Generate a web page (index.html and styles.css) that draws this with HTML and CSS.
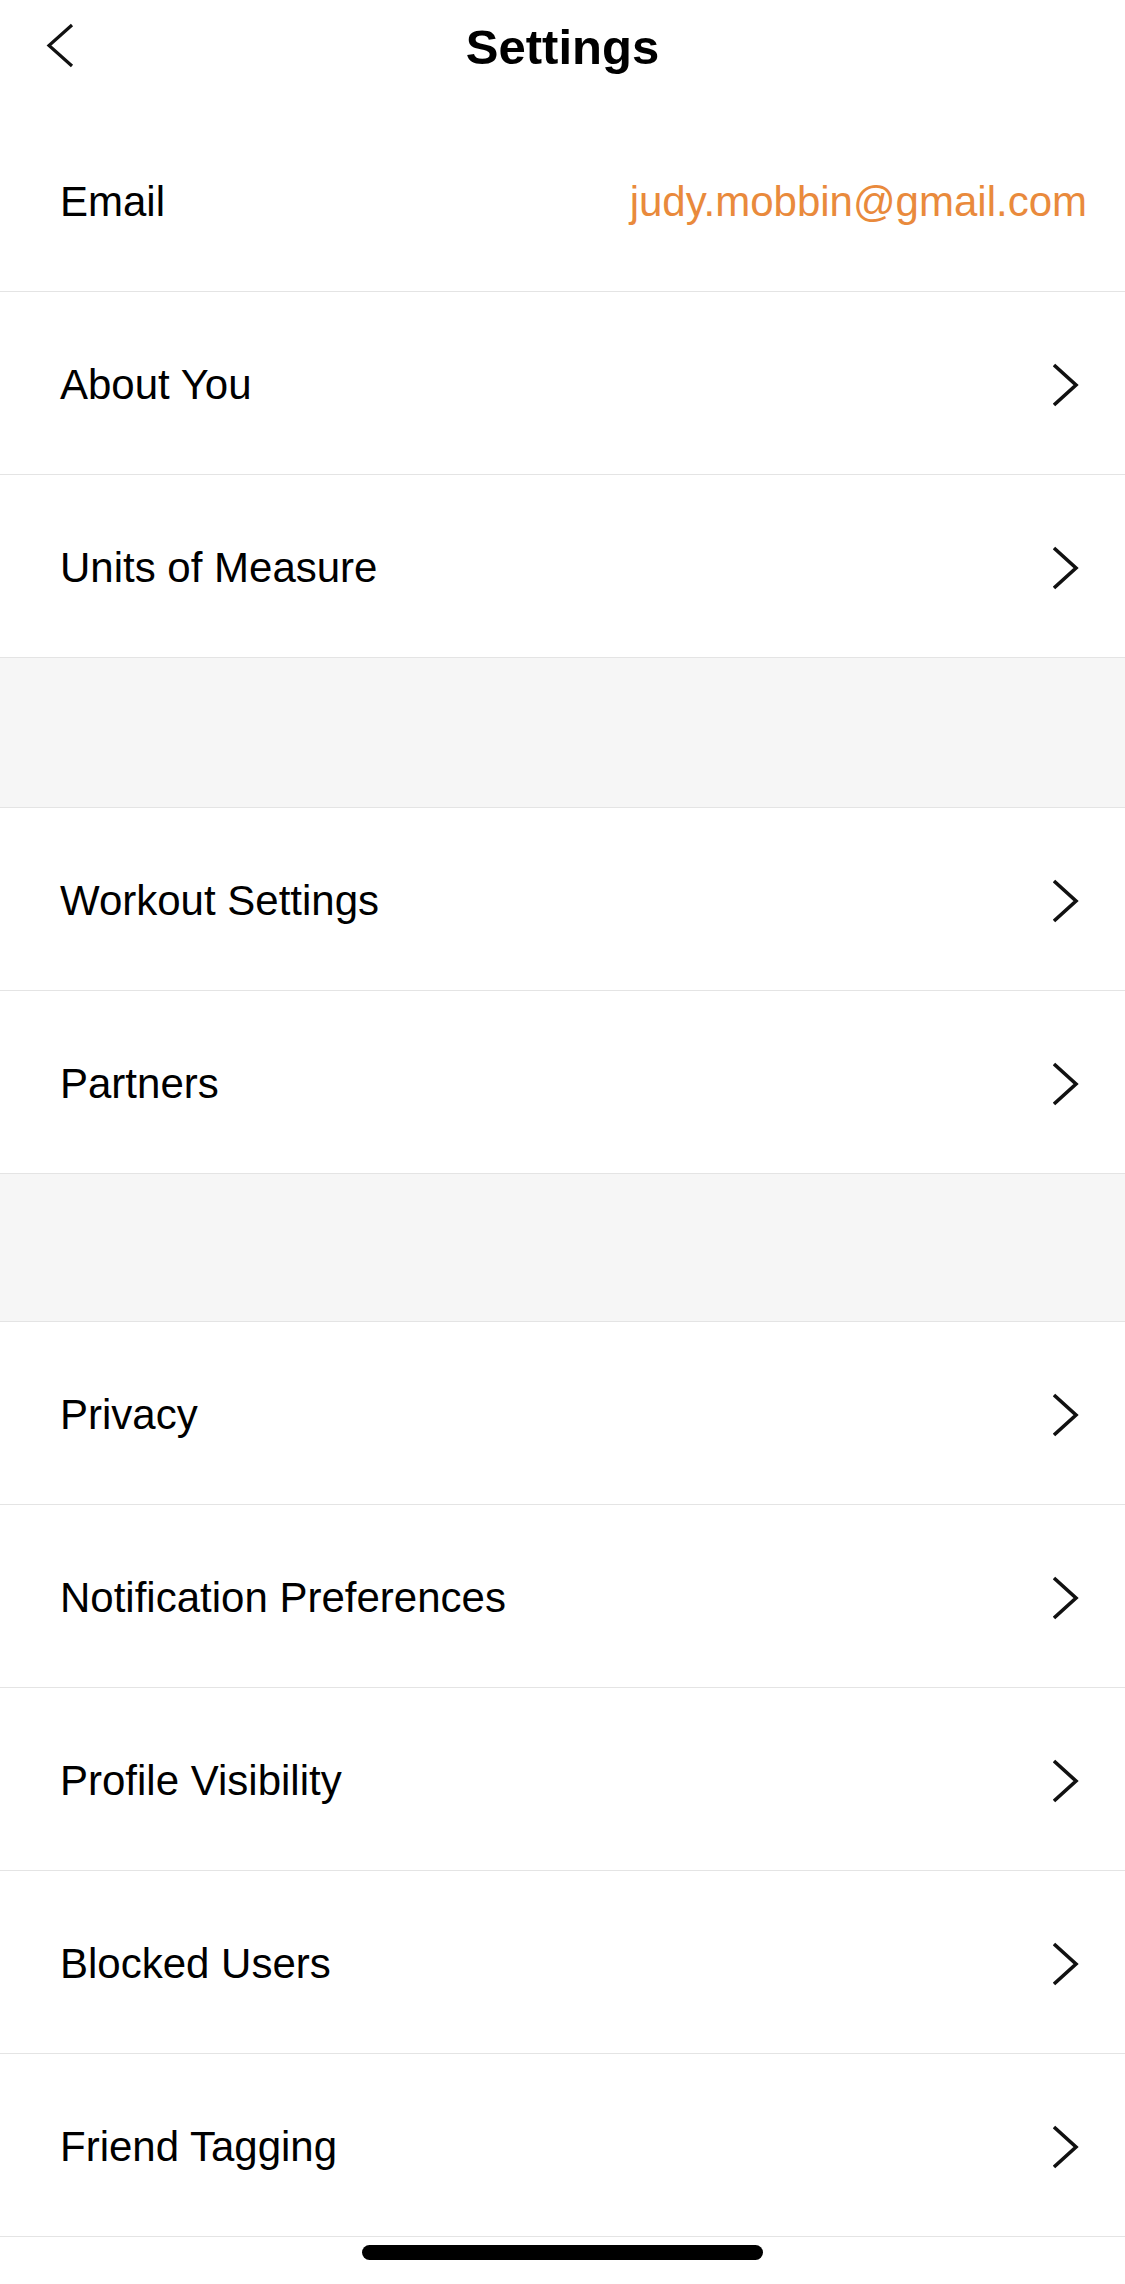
FILE: index.html
```html
<!DOCTYPE html>
<html lang="en">
<head>
<meta charset="utf-8">
<title>Settings</title>
<link rel="stylesheet" href="styles.css">
</head>
<body>
<div class="screen">
  <header class="topbar">
    <button class="back" aria-label="Back">
      <svg width="30" height="48" viewBox="0 0 30 48"><path d="M27 3 L4 23.5 L27 44" fill="none" stroke="#111" stroke-width="3.2" stroke-linejoin="miter"/></svg>
    </button>
    <h1 class="title">Settings</h1>
    <span class="spacer"></span>
  </header>

  <ul class="group">
    <li class="row"><span class="label">Email</span><span class="value">judy.mobbin@gmail.com</span></li>
    <li class="row"><span class="label">About You</span><svg class="chev" width="34" height="48" viewBox="0 0 34 48"><path d="M1 4 L23 24 L1 44" fill="none" stroke="#111" stroke-width="3.6"/></svg></li>
    <li class="row"><span class="label">Units of Measure</span><svg class="chev" width="34" height="48" viewBox="0 0 34 48"><path d="M1 4 L23 24 L1 44" fill="none" stroke="#111" stroke-width="3.6"/></svg></li>
  </ul>
  <div class="gap"></div>
  <ul class="group">
    <li class="row"><span class="label">Workout Settings</span><svg class="chev" width="34" height="48" viewBox="0 0 34 48"><path d="M1 4 L23 24 L1 44" fill="none" stroke="#111" stroke-width="3.6"/></svg></li>
    <li class="row"><span class="label">Partners</span><svg class="chev" width="34" height="48" viewBox="0 0 34 48"><path d="M1 4 L23 24 L1 44" fill="none" stroke="#111" stroke-width="3.6"/></svg></li>
  </ul>
  <div class="gap gap-b"></div>
  <ul class="group">
    <li class="row"><span class="label">Privacy</span><svg class="chev" width="34" height="48" viewBox="0 0 34 48"><path d="M1 4 L23 24 L1 44" fill="none" stroke="#111" stroke-width="3.6"/></svg></li>
    <li class="row"><span class="label">Notification Preferences</span><svg class="chev" width="34" height="48" viewBox="0 0 34 48"><path d="M1 4 L23 24 L1 44" fill="none" stroke="#111" stroke-width="3.6"/></svg></li>
    <li class="row"><span class="label">Profile Visibility</span><svg class="chev" width="34" height="48" viewBox="0 0 34 48"><path d="M1 4 L23 24 L1 44" fill="none" stroke="#111" stroke-width="3.6"/></svg></li>
    <li class="row"><span class="label">Blocked Users</span><svg class="chev" width="34" height="48" viewBox="0 0 34 48"><path d="M1 4 L23 24 L1 44" fill="none" stroke="#111" stroke-width="3.6"/></svg></li>
    <li class="row"><span class="label">Friend Tagging</span><svg class="chev" width="34" height="48" viewBox="0 0 34 48"><path d="M1 4 L23 24 L1 44" fill="none" stroke="#111" stroke-width="3.6"/></svg></li>
  </ul>
  <div class="home-indicator"></div>
</div>
</body>
</html>
```

FILE: styles.css
```css
* { box-sizing: border-box; }
html, body {
  margin: 0;
  padding: 0;
  background: #ffffff;
}
body {
  font-family: "Liberation Sans", Arial, Helvetica, sans-serif;
  color: #000;
}
.screen {
  width: 1125px;
  min-height: 2284px;
  background: #fff;
}
.topbar {
  height: 92px;
  margin-bottom: 17px;
  display: grid;
  grid-template-columns: 200px 1fr 200px;
  align-items: center;
}
.back {
  border: 0;
  background: none;
  padding: 0 0 0 45px;
  margin: 0;
  display: flex;
  align-items: center;
  height: 48px;
  cursor: pointer;
}
.back svg { display: block; }
.title {
  margin: 0;
  padding-top: 2px;
  text-align: center;
  font-size: 49px;
  font-weight: 700;
  letter-spacing: 0;
  line-height: 56px;
}
.group {
  list-style: none;
  margin: 0;
  padding: 0;
}
.row {
  height: 183px;
  border-bottom: 1px solid #e4e4e4;
  display: flex;
  align-items: center;
  justify-content: space-between;
  padding: 4px 38px 0 60px;
  font-size: 42px;
}
.label { color: #000; }
.value { color: #e98a3c; }
.chev {
  display: block;
}
.gap {
  height: 150px;
  background: #f6f6f6;
  border-bottom: 1px solid #e4e4e4;
}
.gap-b { height: 148px; }
.home-indicator {
  position: fixed;
  left: 362px;
  bottom: 24px;
  width: 401px;
  height: 15px;
  border-radius: 8px;
  background: #000;
}
```
